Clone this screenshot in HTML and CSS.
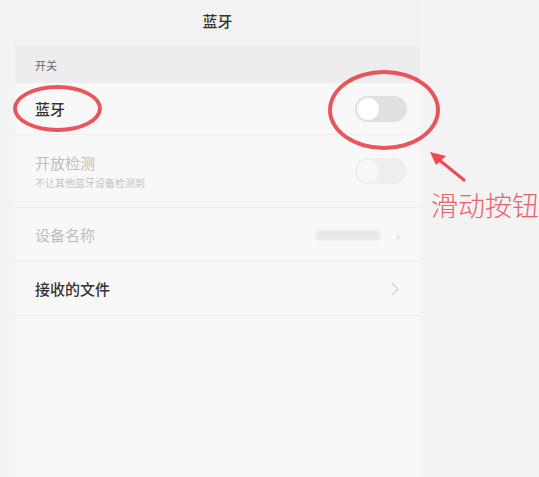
FILE: index.html
```html
<!DOCTYPE html>
<html lang="zh">
<head>
<meta charset="utf-8">
<link rel="stylesheet" href="styles.css">
</head>
<body>
<div class="stage">
  <div class="phone">
    <div class="titlebar">蓝牙</div>
    <div class="section">开关</div>
    <div class="row row-main">
      <span class="label">蓝牙</span>
      <span class="toggle"><span class="knob"></span></span>
    </div>
    <div class="row row-tall disabled">
      <div class="texts">
        <span class="label">开放检测</span>
        <span class="sub">不让其他蓝牙设备检测到</span>
      </div>
      <span class="toggle faded"><span class="knob"></span></span>
    </div>
    <div class="row disabled">
      <span class="label">设备名称</span>
      <span class="value"><span class="blur"></span><span class="chev faint">›</span></span>
    </div>
    <div class="row">
      <span class="label dark">接收的文件</span>
      <svg class="chev-svg" width="10" height="16" viewBox="0 0 10 16"><path d="M2 2 L8 8 L2 14" fill="none" stroke="#cfcfcf" stroke-width="1.3"/></svg>
    </div>
    <div class="rest"></div>
  </div>
  <div class="ring ring-label"></div>
  <div class="ring ring-toggle"></div>
  <svg class="arrow" width="50" height="44" viewBox="0 0 50 44">
    <path d="M36 30 L10 9" stroke="#ee4a55" stroke-width="3" stroke-linecap="round"/>
    <path d="M2 2 L18 6 L8 15 Z" fill="#ee4a55"/>
  </svg>
  <div class="note">滑动按钮</div>
</div>
</body>
</html>
```
FILE: styles.css
```css
* { box-sizing: border-box; }
html, body { margin: 0; padding: 0; }
body {
  width: 539px;
  height: 477px;
  background: #f3f3f3;
  font-family: "Noto Sans CJK SC", "Noto Sans", sans-serif;
  overflow: hidden;
}
.stage {
  position: relative;
  width: 539px;
  height: 477px;
  padding-left: 15px;
}
.phone {
  width: 405px;
  height: 477px;
  background: #f8f8f8;
  display: flex;
  flex-direction: column;
}
.titlebar {
  height: 45px;
  background: #f2f2f2;
  display: flex;
  align-items: center;
  justify-content: center;
  font-size: 15px;
  font-weight: 500;
  color: #333;
  padding-bottom: 4px;
}
.section {
  height: 38px;
  background: #ededed;
  font-size: 11px;
  color: #666;
  display: flex;
  align-items: center;
  padding-left: 20px;
  padding-top: 2px;
}
.row {
  height: 54px;
  border-bottom: 1px solid #ebebeb;
  display: flex;
  align-items: center;
  justify-content: space-between;
  padding: 0 10px 0 20px;
}
.row-main { height: 52px; border-bottom: 1px solid #efefef; }
.row-main .label { font-weight: 500; }
.row-tall { height: 73px; }
.label { font-size: 15px; color: #333; }
.label.dark { color: #333; font-weight: 500; }
.disabled .label { color: #bdbdbd; }
.texts { display: flex; flex-direction: column; line-height: 1.2; }
.sub { font-size: 10px; color: #c4c4c4; margin-top: 5px; }
.toggle {
  width: 52px;
  height: 26px;
  border-radius: 13px;
  background: #e0e0e0;
  display: flex;
  align-items: center;
  padding-left: 2px;
  margin-right: 3px;
}
.knob {
  width: 22px;
  height: 22px;
  border-radius: 50%;
  background: #ffffff;
}
.toggle.faded { background: #eeeeee; }
.toggle.faded .knob { background: #f7f7f7; }
.value { display: flex; align-items: center; gap: 16px; margin-right: 10px; }
.blur {
  width: 64px;
  height: 10px;
  background: #e6e6e6;
  border-radius: 2px;
  filter: blur(1px);
}
.chev { color: #d4d4d4; font-size: 14px; }
.chev-svg { margin-right: 10px; }
.rest { flex: 1; }
.ring {
  position: absolute;
  border: 4px solid #e8474f;
  border-radius: 50%;
  opacity: 0.92;
}
.ring-label { left: 13px; top: 85px; width: 89px; height: 47px; }
.ring-toggle { left: 328px; top: 70px; width: 112px; height: 80px; }
.arrow { position: absolute; left: 428px; top: 150px; }
.note {
  position: absolute;
  left: 431px;
  top: 185px;
  font-size: 27px;
  font-weight: 300;
  color: #e9616d;
  white-space: nowrap;
}
```
